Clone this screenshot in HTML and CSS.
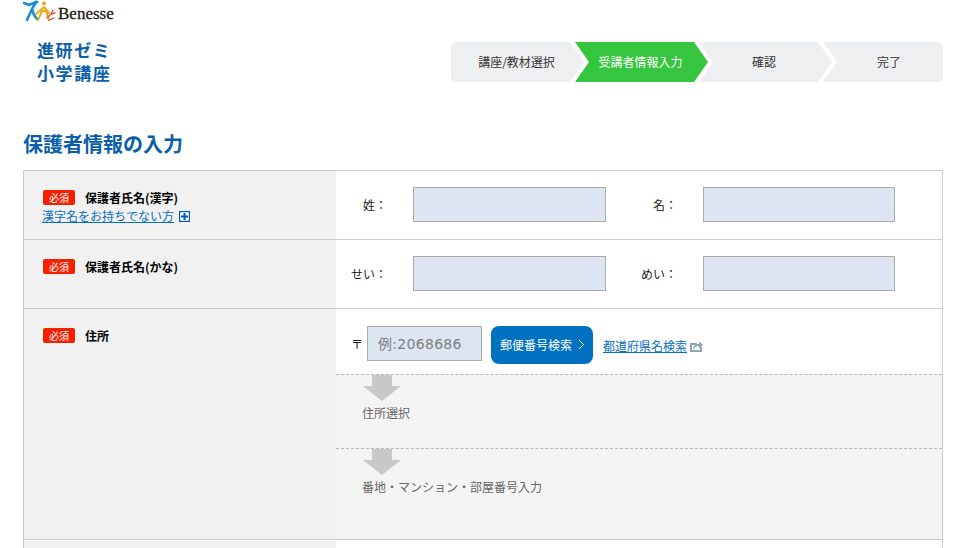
FILE: index.html
```html
<!DOCTYPE html>
<html lang="ja">
<head>
  <meta charset="UTF-8">
  <title>保護者情報の入力</title>
  <link rel="stylesheet" href="styles.css">
</head>
<body>
  <header class="site-header">
    <div class="benesse">
      <svg class="benesse-mark" width="34" height="23" viewBox="0 0 34 23" fill="none">
        <path d="M1 3 L6 5 L13 2 M13 2 L9 9 L4 20 M9 9 L11 15 L14 19" stroke="#1c8ed0" stroke-width="2.6" stroke-linecap="round" stroke-linejoin="round"/>
        <circle cx="14" cy="2" r="1.5" fill="#1c8ed0"/>
        <path d="M15 20 L19 11 L23 11 L26 20 M13 14 L21 7 L26 13" stroke="#eba91c" stroke-width="2" stroke-linecap="round" stroke-linejoin="round"/>
        <circle cx="21" cy="3.500" r="2" fill="#eba91c"/>
        <path d="M24 18 L28 14 L32 13 M26 20 L31 18 M28 14 L30 10" stroke="#e8452c" stroke-width="1.3" stroke-linecap="round"/>
      </svg>
      <span class="benesse-name">Benesse</span>
    </div>
    <div class="header-main">
      <p class="course-name">進研ゼミ<br>小学講座</p>
      <ol class="steps">
        <li class="step step-first">講座/教材選択</li>
        <li class="step step-current">受講者情報入力</li>
        <li class="step step-third">確認</li>
        <li class="step step-last">完了</li>
      </ol>
    </div>
  </header>

  <main class="content">
    <h1 class="page-title">保護者情報の入力</h1>

    <div class="form-table">
      <div class="form-row">
        <div class="form-head">
          <div class="head-line"><span class="required">必須</span><span class="head-label">保護者氏名(漢字)</span></div>
          <a class="text-link" href="#">漢字名をお持ちでない方</a>
          <svg class="plus-icon" width="11" height="11" viewBox="0 0 11 11">
            <rect x="0.5" y="0.5" width="10" height="10" fill="#fff" stroke="#0058c8" stroke-width="1.4"/>
            <path d="M2 5.500h7M5.500 2v7" stroke="#0058c8" stroke-width="2"/>
          </svg>
        </div>
        <div class="form-body name-fields">
          <label class="field-label">姓：</label>
          <input class="text-input" type="text">
          <label class="field-label field-label-second">名：</label>
          <input class="text-input input-second" type="text">
        </div>
      </div>

      <div class="form-row">
        <div class="form-head">
          <div class="head-line"><span class="required">必須</span><span class="head-label">保護者氏名(かな)</span></div>
        </div>
        <div class="form-body name-fields">
          <label class="field-label">せい：</label>
          <input class="text-input" type="text">
          <label class="field-label field-label-second">めい：</label>
          <input class="text-input input-second" type="text">
        </div>
      </div>

      <div class="form-row">
        <div class="form-head">
          <div class="head-line"><span class="required">必須</span><span class="head-label">住所</span></div>
        </div>
        <div class="form-body address">
          <div class="zip-line">
            <span class="zip-mark">〒</span>
            <input class="text-input zip-input" type="text" placeholder="例:2068686">
            <button class="zip-button" type="button">郵便番号検索
              <svg width="7" height="11" viewBox="0 0 7 11" fill="none"><path d="M1 1l4.500 4.500L1 10" stroke="#fff"/></svg>
            </button>
            <a class="text-link zip-link" href="#">都道府県名検索</a>
            <svg class="open-icon" width="13" height="11" viewBox="0 0 13 11">
              <path d="M0 2h7v2H2v5h8V6h2v5H0z" fill="#8fa3b8"/>
              <path d="M3 8.500c0-3.500 2.500-5.500 6-5.500V0.500L13 4 9 7.500V5C7 5 4.500 6 3 8.500z" fill="#8fa3b8"/>
            </svg>
          </div>
          <div class="address-step address-step-select">
            <span class="down-arrow"></span>
            <p class="address-step-text">住所選択</p>
          </div>
          <div class="address-step address-step-detail">
            <span class="down-arrow"></span>
            <p class="address-step-text">番地・マンション・部屋番号入力</p>
          </div>
        </div>
      </div>

      <div class="form-row form-row-last">
        <div class="form-head"></div>
        <div class="form-body"></div>
      </div>
    </div>
  </main>
</body>
</html>
```

FILE: styles.css
```css
* { box-sizing: border-box; margin: 0; padding: 0; }
html, body { height: 548px; overflow: hidden; }
body {
  font-family: "Noto Sans CJK JP", "Noto Sans", sans-serif;
  font-size: 12px;
  color: #333;
  background: #fff;
}

/* header */
.site-header {
  height: 130px;
  padding: 0 10px 0 23px;
}
.benesse {
  display: flex;
  align-items: flex-start;
  height: 32px;
}
.benesse-name {
  font-family: "Liberation Serif", serif;
  font-size: 17px;
  font-weight: 400;
  line-height: 27px;
  margin-left: 1px;
  color: #231815;
  -webkit-text-stroke: 0.3px #231815;
}
.header-main {
  display: flex;
  justify-content: space-between;
  align-items: flex-start;
}
.course-name {
  margin: 6px 0 0 14px;
  font-size: 17px;
  font-weight: 700;
  line-height: 23px;
  letter-spacing: 1.6px;
  color: #0a5eaa;
}
.steps {
  display: flex;
  list-style: none;
  margin-top: 10px;
}
.step {
  width: 133px;
  height: 40px;
  margin-left: -9px;
  line-height: 40px;
  text-align: center;
  background: #eeeff1;
  clip-path: polygon(0 0, calc(100% - 14px) 0, 100% 50%, calc(100% - 14px) 100%, 0 100%, 14px 50%);
}
.step-first {
  margin-left: 0;
  padding-right: 2px;
  border-radius: 5px 0 0 5px;
  clip-path: polygon(0 0, calc(100% - 14px) 0, 100% 50%, calc(100% - 14px) 100%, 0 100%);
}
.step-current {
  padding-right: 2px;
  color: #fff;
  background: #36c53e;
}
.step-third { padding-right: 3px; }
.step-last {
  width: 120px;
  padding-left: 12px;
  border-radius: 0 5px 5px 0;
  clip-path: polygon(0 0, 100% 0, 100% 100%, 0 100%, 14px 50%);
}

/* form */
.content { padding: 0 10px 0 23px; }
.page-title {
  font-size: 20px;
  font-weight: 700;
  line-height: 28px;
  color: #0a5eaa;
}
.form-table {
  height: 378px;
  margin-top: 12px;
  border: 1px solid #ccc;
  border-bottom: 0;
}
.form-row {
  display: grid;
  grid-template-columns: 312px 1fr;
  border-bottom: 1px solid #ccc;
}
.form-row-last { height: 8px; border-bottom: 0; }
.form-head {
  padding: 19px 0 0 19px;
  background: #f1f1f1;
}
.form-row-last .form-head { margin-top: 1px; }
.head-line {
  display: flex;
  align-items: center;
  height: 15px;
}
.required {
  width: 32px;
  height: 15px;
  margin-right: 10px;
  border-radius: 2px;
  font-size: 10px;
  line-height: 15px;
  text-align: center;
  color: #fff;
  background: #f42000;
}
.head-label {
  font-weight: 700;
  color: #000;
}
.text-link {
  color: #0a6fc2;
  text-decoration: underline;
}
.form-head .text-link {
  display: inline-block;
  line-height: 18px;
  margin: 2px 0 0 -1px;
}
.plus-icon {
  margin-left: 2px;
  vertical-align: -1px;
}

.name-fields {
  display: flex;
  align-items: center;
  height: 68px;
  padding-bottom: 1px;
}
.field-label {
  width: 51px;
  margin-right: 26px;
  text-align: right;
  color: #222;
}
.field-label-second { width: 71px; }
.text-input {
  width: 193px;
  height: 35px;
  border: 1px solid #aaa;
  background: #dce5f1;
}
.input-second { width: 192px; }

.address { background: #f4f4f4; }
.zip-line {
  display: flex;
  align-items: flex-start;
  height: 65px;
  padding: 17px 0 0 15px;
  background: #fff;
}
.zip-mark {
  width: 16px;
  line-height: 35px;
  color: #222;
}
.zip-input {
  width: 115px;
  padding-left: 10px;
  font-family: "DejaVu Sans", "Noto Sans CJK JP", sans-serif;
  font-size: 14px;
  letter-spacing: 0.3px;
}
.zip-input::placeholder { color: #7d7d7d; opacity: 1; }
.zip-button {
  display: flex;
  align-items: center;
  justify-content: center;
  gap: 6px;
  width: 102px;
  height: 38px;
  margin-left: 9px;
  padding: 0 0 2px 1px;
  border: 0;
  border-radius: 8px;
  font-family: inherit;
  font-size: 12px;
  color: #fff;
  background: #0071c1;
}
.zip-link {
  margin: 10px 0 0 10px;
  line-height: 20px;
}
.open-icon { margin: 15px 0 0 3px; }
.address-step {
  border-top: 1px dashed #b5b5b5;
  padding-left: 26px;
}
.address-step-select { height: 74px; }
.address-step-detail { height: 91px; }
.down-arrow {
  display: block;
  width: 38px;
  height: 26px;
  margin-left: 1px;
  background: #c8c8c8;
  clip-path: polygon(9px 0, 29px 0, 29px 11px, 38px 11px, 19px 26px, 0 11px, 9px 11px);
}
.address-step-text {
  margin-top: 2px;
  line-height: 20px;
  color: #666;
}
```
